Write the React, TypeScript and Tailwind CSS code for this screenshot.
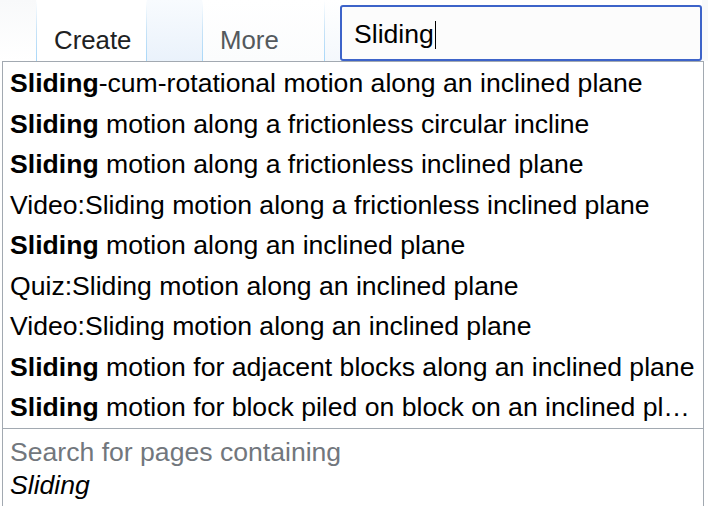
import React from "react";

const SUGGESTIONS: { bold?: string; rest: string }[] = [
  { bold: "Sliding", rest: "-cum-rotational motion along an inclined plane" },
  { bold: "Sliding", rest: " motion along a frictionless circular incline" },
  { bold: "Sliding", rest: " motion along a frictionless inclined plane" },
  { rest: "Video:Sliding motion along a frictionless inclined plane" },
  { bold: "Sliding", rest: " motion along an inclined plane" },
  { rest: "Quiz:Sliding motion along an inclined plane" },
  { rest: "Video:Sliding motion along an inclined plane" },
  { bold: "Sliding", rest: " motion for adjacent blocks along an inclined plane" },
  { bold: "Sliding", rest: " motion for block piled on block on an inclined plane" },
];

function Divider() {
  return <div className="w-px self-stretch bg-gradient-to-b from-white via-[#c8e3f7] to-[#a7d7f9]" />;
}

export default function App() {
  return (
    <div className="h-[506px] w-[708px] overflow-hidden bg-white font-['Liberation_Sans',Arial,sans-serif] text-[26.6px]">
      {/* Tabs + search */}
      <div className="flex h-[61px] items-stretch">
        <div className="w-[36px] bg-gradient-to-b from-[#f8f9fa] to-white" />
        <Divider />
        <div className="flex w-[109px] items-end bg-white pb-[1px] pl-[17px] text-[25.8px] text-[#202122]">Create</div>
        <Divider />
        <div className="w-[55px] bg-gradient-to-b from-[#f8fbfe] to-[#eaf2fb]" />
        <Divider />
        <div className="flex w-[121px] items-end bg-gradient-to-b from-white to-[#fbfcfd] pb-[1px] pl-[17px] text-[25.8px] text-[#54595d]">More</div>
        <Divider />
        <div className="w-[15px] bg-gradient-to-b from-white to-[#f4f8fc]" />
        <div className="flex w-[362px] items-end">
          <div className="flex h-[56px] w-full items-center rounded-[3px] border-2 border-[#3d63c9] bg-[#fcfcfc] pt-[4px] pl-[12px] text-black">
            Sliding
            <span className="ml-[1px] h-[28px] w-px bg-black" />
          </div>
        </div>
        <div className="flex-1 bg-[#f8f9fa]" />
      </div>

      {/* Suggestions dropdown */}
      <div className="ml-[2px] w-[702px] border border-b-0 border-[#a2a9b1] bg-white pt-px">
        {SUGGESTIONS.map((s, i) => (
          <div key={i} className="h-[40.5px] truncate pr-[2px] pl-[7px] leading-[40.5px] text-black">
            {s.bold && <b className="font-bold">{s.bold}</b>}
            {s.rest}
          </div>
        ))}
        <div className="border-t border-[#a2a9b1] px-[7px] pt-[7px] pb-[20px] leading-[33px]">
          <div className="text-[#72777d]">Search for pages containing</div>
          <div className="italic text-black">Sliding</div>
        </div>
      </div>
    </div>
  );
}
